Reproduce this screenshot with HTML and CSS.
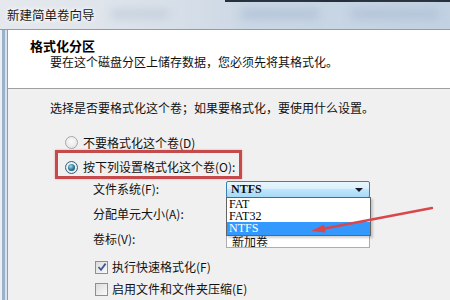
FILE: index.html
```html
<!DOCTYPE html>
<html lang="zh-CN">
<head>
  <meta charset="UTF-8">
  <title>新建简单卷向导</title>
  <link rel="stylesheet" href="styles.css">
</head>
<body>
  <div class="window">
    <div class="titlebar">
      <span class="title">新建简单卷向导</span>
      <span class="glass glass-a"></span>
      <span class="glass glass-b"></span>
      <span class="glass glass-c"></span>
    </div>

    <div class="frame">
      <div class="frame-edge"></div>
      <div class="client">
        <div class="header">
          <div class="header-title">格式化分区</div>
          <div class="header-sub">要在这个磁盘分区上储存数据，您必须先将其格式化。</div>
        </div>

        <div class="content">
          <p class="intro">选择是否要格式化这个卷；如果要格式化，要使用什么设置。</p>

          <div class="option"><span class="radio"></span>不要格式化这个卷(D)</div>
          <div class="highlight">
            <div class="option"><span class="radio checked"></span>按下列设置格式化这个卷(O):</div>
          </div>

          <div class="settings">
            <div class="setting">
              <span class="setting-label">文件系统(F):</span>
              <div class="combo">
                NTFS<span class="combo-arrow"></span>
                <ul class="dropdown">
                  <li>FAT</li>
                  <li>FAT32</li>
                  <li class="active">NTFS</li>
                </ul>
              </div>
            </div>
            <div class="setting">
              <span class="setting-label">分配单元大小(A):</span>
              <div class="combo plain"></div>
            </div>
            <div class="setting">
              <span class="setting-label">卷标(V):</span>
              <div class="textbox">新加卷</div>
            </div>
          </div>

          <div class="check">
            <span class="checkbox">
              <svg width="10" height="10" viewBox="0 0 10 10"><path d="M1.5 5 L4 7.8 L8.6 1.6" fill="none" stroke="#3d5a98" stroke-width="1.8"/></svg>
            </span>
            执行快速格式化(F)
          </div>
          <div class="check"><span class="checkbox"></span>启用文件和文件夹压缩(E)</div>
        </div>
      </div>
    </div>

    <!-- red annotation arrow -->
    <svg class="arrow" width="450" height="300" viewBox="0 0 450 300">
      <line x1="432" y1="208" x2="322" y2="229" stroke="#d9474c" stroke-width="2.4" stroke-linecap="round"/>
      <polygon points="311,231 324,224.5 325.5,232.5" fill="#d9474c"/>
    </svg>
  </div>
</body>
</html>
```

FILE: styles.css
```css
body {
  margin: 0;
  font-family: "Noto Sans CJK SC", "Noto Sans", sans-serif;
  font-size: 12px;
  color: #111;
  background: #f0f0f0;
}

.window {
  position: relative;
  width: 450px;
  height: 300px;
  overflow: hidden;
  background: #f0f0f0;
}

.titlebar {
  position: relative;
  height: 29px;
  border-bottom: 1px solid #8d9caf;
  background: linear-gradient(90deg, #e5e9ee 0%, #dde3ea 30%, #ccd8e5 55%, #c2d2e3 100%);
  overflow: hidden;
}

.titlebar::before {
  content: "";
  position: absolute;
  left: 225px;
  right: 0;
  top: 0;
  height: 2px;
  background: #26303c;
}

.title {
  position: relative;
  z-index: 1;
  display: block;
  padding: 6px 0 0 7px;
  font-size: 12.5px;
  line-height: 17px;
  color: #1a1a1a;
  text-shadow: 0 0 6px #fff, 0 0 4px #fff;
}

.glass {
  position: absolute;
  top: 9px;
  height: 10px;
  border-radius: 5px;
  background: #b3c4d8;
  filter: blur(5px);
}

.glass-a { left: 110px; width: 60px; background: #c6d1de; }
.glass-b { left: 240px; width: 80px; }
.glass-c { left: 350px; width: 90px; }

.frame {
  display: flex;
  height: 270px;
}

.frame-edge {
  width: 8px;
  flex: none;
  background: linear-gradient(90deg, #e8eff7 0 2px, #9cb0c6 2px 5px, #d6e2ef 5px 7px, #8e9db0 7px 8px);
}

.client {
  flex: 1;
  display: flex;
  flex-direction: column;
}

.header {
  height: 59px;
  box-sizing: border-box;
  padding: 7px 0 0 22px;
  background: #fff;
  border-bottom: 1px solid #a0a0a0;
}

.header-title {
  font-size: 13px;
  font-weight: 700;
  line-height: 17px;
  color: #000;
}

.header-sub {
  margin-left: 20px;
  line-height: 15px;
}

.content {
  padding: 11px 0 0 42px;
}

.intro {
  margin: 0;
  line-height: 16px;
}

.option {
  display: flex;
  align-items: center;
  line-height: 15px;
}

.content > .option {
  margin: 19px 0 0 15px;
}

.radio {
  width: 11px;
  height: 11px;
  margin-right: 5px;
  border: 1px solid #a4a8ad;
  border-radius: 50%;
  background: radial-gradient(circle at 50% 40%, #fbfbfb, #e0e0e0);
  position: relative;
}

.radio.checked {
  border-color: #2f5f80;
}

.radio.checked::after {
  content: "";
  position: absolute;
  left: 2px;
  top: 2px;
  width: 7px;
  height: 7px;
  border-radius: 50%;
  background: radial-gradient(circle at 40% 35%, #9fe0f2, #2a7190 55%, #123f55);
}

.highlight {
  width: 187px;
  height: 29px;
  box-sizing: border-box;
  margin-left: 5px;
  padding: 6px 0 0 7px;
  border: 3px solid #c54a4b;
  box-shadow: 0 0 2px #eaa6a6;
}

.highlight .option {
  line-height: 16px;
}

.settings {
  display: flex;
  flex-direction: column;
  gap: 8px;
  margin: 2px 0 0 43px;
}

.setting {
  display: flex;
  align-items: center;
  height: 17px;
}

.setting-label {
  width: 133px;
  flex: none;
  line-height: 15px;
  margin-top: -2px;
}

.combo {
  position: relative;
  width: 144px;
  height: 17px;
  box-sizing: border-box;
  padding-left: 4px;
  border: 1px solid #3c7fb1;
  border-radius: 2px;
  background: linear-gradient(#eaf6fd 0%, #d9f0fc 45%, #bee6fd 50%, #a7d9f5 100%);
  font-family: "Liberation Serif", serif;
  font-weight: 700;
  font-size: 12px;
  line-height: 15px;
  color: #101010;
}

.combo.plain {
  background: #fff;
  border-color: #abadb3;
}

.combo-arrow {
  position: absolute;
  right: 6px;
  top: 6px;
  border-left: 4px solid transparent;
  border-right: 4px solid transparent;
  border-top: 4px solid #1a1a2a;
}

.dropdown {
  position: absolute;
  z-index: 2;
  left: -1px;
  top: 15px;
  width: 145px;
  margin: 0;
  padding: 0;
  list-style: none;
  box-sizing: border-box;
  border: 1px solid #646464;
  background: #fff;
  box-shadow: 2px 2px 2px rgba(0, 0, 0, 0.18);
  font-family: "Liberation Serif", serif;
  font-weight: 400;
  font-size: 12px;
  line-height: 12px;
}

.dropdown li {
  padding-left: 2px;
  height: 12px;
  color: #000;
}

.dropdown li.active {
  height: 13px;
  background: #3399ff;
  color: #fff;
}

.textbox {
  width: 144px;
  height: 17px;
  box-sizing: border-box;
  padding: 0 0 0 5px;
  border: 1px solid #abadb3;
  background: #fff;
  line-height: 19px;
  overflow: hidden;
}

.check {
  display: flex;
  align-items: center;
  margin-left: 45px;
  line-height: 16px;
}

.settings + .check {
  margin-top: 11px;
}

.check + .check {
  margin-top: 6px;
}

.checkbox {
  width: 11px;
  height: 11px;
  margin-right: 4px;
  border: 1px solid #8f8f8f;
  background: linear-gradient(135deg, #dcdcdc, #fafafa);
  display: flex;
  align-items: center;
  justify-content: center;
}

.arrow {
  position: absolute;
  z-index: 5;
  left: 0;
  top: 0;
  pointer-events: none;
}
```
